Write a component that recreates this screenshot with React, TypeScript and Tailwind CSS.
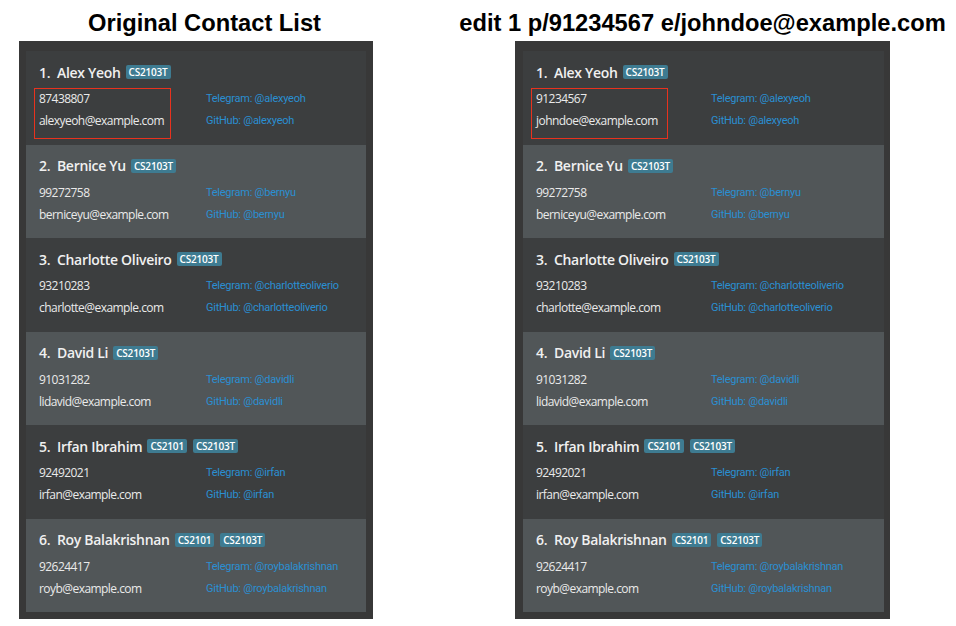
const BASE = [
  { name: "Alex Yeoh", tags: ["CS2103T"], phone: "87438807", email: "alexyeoh@example.com", handle: "@alexyeoh" },
  { name: "Bernice Yu", tags: ["CS2103T"], phone: "99272758", email: "berniceyu@example.com", handle: "@bernyu" },
  { name: "Charlotte Oliveiro", tags: ["CS2103T"], phone: "93210283", email: "charlotte@example.com", handle: "@charlotteoliverio" },
  { name: "David Li", tags: ["CS2103T"], phone: "91031282", email: "lidavid@example.com", handle: "@davidli" },
  { name: "Irfan Ibrahim", tags: ["CS2101", "CS2103T"], phone: "92492021", email: "irfan@example.com", handle: "@irfan" },
  { name: "Roy Balakrishnan", tags: ["CS2101", "CS2103T"], phone: "92624417", email: "royb@example.com", handle: "@roybalakrishnan" },
];

type Contact = (typeof BASE)[number];

const EDITED: Contact[] = BASE.map((c, i) =>
  i === 0 ? { ...c, phone: "91234567", email: "johndoe@example.com" } : c
);

function Card({ c, index, leftCol }: { c: Contact; index: number; leftCol: string }) {
  const dark = index % 2 === 0;
  return (
    <div className={`flex-1 pl-[13px] pt-[11px] ${dark ? "bg-[#3c3e3f]" : "bg-[#515658]"}`}>
      <div className="flex items-center h-[20px] gap-[5px]">
        <span className="text-[14px] tracking-[-0.3px] font-semibold text-[#f0f0f0] whitespace-nowrap">
          {index + 1}.&nbsp;&nbsp;{c.name}
        </span>
        {c.tags.map((t) => (
          <span
            key={t}
            className="bg-[#3e7b91] text-white text-[10px] font-semibold tracking-[-0.2px] leading-[14px] px-[3px] rounded-[2px] mr-[1px]"
          >
            {t}
          </span>
        ))}
      </div>
      <div className="flex mt-[6px]">
        <div className={`relative ${leftCol} text-[12px] tracking-[-0.55px] text-[#eaeaea]`}>
          <div className="h-[22px] leading-[22px]">{c.phone}</div>
          <div className="h-[22px] leading-[22px]">{c.email}</div>
          {index === 0 && (
            <div className="absolute -left-[5px] top-0 w-[137px] h-[51px] border border-[#e8321e]" />
          )}
        </div>
        <div className="font-['Roboto',sans-serif] text-[11px] text-[#2a8fd2] tracking-[-0.25px]">
          <div className="h-[22px] leading-[22px]">Telegram: {c.handle}</div>
          <div className="h-[22px] leading-[22px]">GitHub: {c.handle}</div>
        </div>
      </div>
    </div>
  );
}

function Panel({ contacts, width, pad, leftCol }: { contacts: Contact[]; width: string; pad: string; leftCol: string }) {
  return (
    <div className={`${width} ${pad} h-[578px] bg-[#383838] pt-[10px] pb-[7px] flex flex-col`}>
      {contacts.map((c, i) => (
        <Card key={c.name} c={c} index={i} leftCol={leftCol} />
      ))}
    </div>
  );
}

export default function App() {
  return (
    <div className="w-[956px] h-[626px] bg-white flex font-['Open_Sans',sans-serif] overflow-hidden">
      <div className="ml-[19px] w-[354px] flex flex-col">
        <div className="w-[354px] h-[41px] pt-[9px] pl-[17px] flex justify-center font-['Liberation_Sans',Arial,sans-serif] font-bold text-[23.7px] leading-[28px] text-black whitespace-nowrap">
          Original Contact List
        </div>
        <Panel contacts={BASE} width="w-[354px]" pad="px-[7px]" leftCol="w-[167px]" />
      </div>
      <div className="ml-[142px] w-[375px] flex flex-col">
        <div className="w-[375px] h-[41px] pt-[9px] flex justify-center font-['Liberation_Sans',Arial,sans-serif] font-bold text-[23.7px] leading-[28px] text-black whitespace-nowrap">
          edit 1 p/91234567 e/johndoe@example.com
        </div>
        <Panel contacts={EDITED} width="w-[375px]" pad="pl-[8px] pr-[6px]" leftCol="w-[175px]" />
      </div>
    </div>
  );
}
